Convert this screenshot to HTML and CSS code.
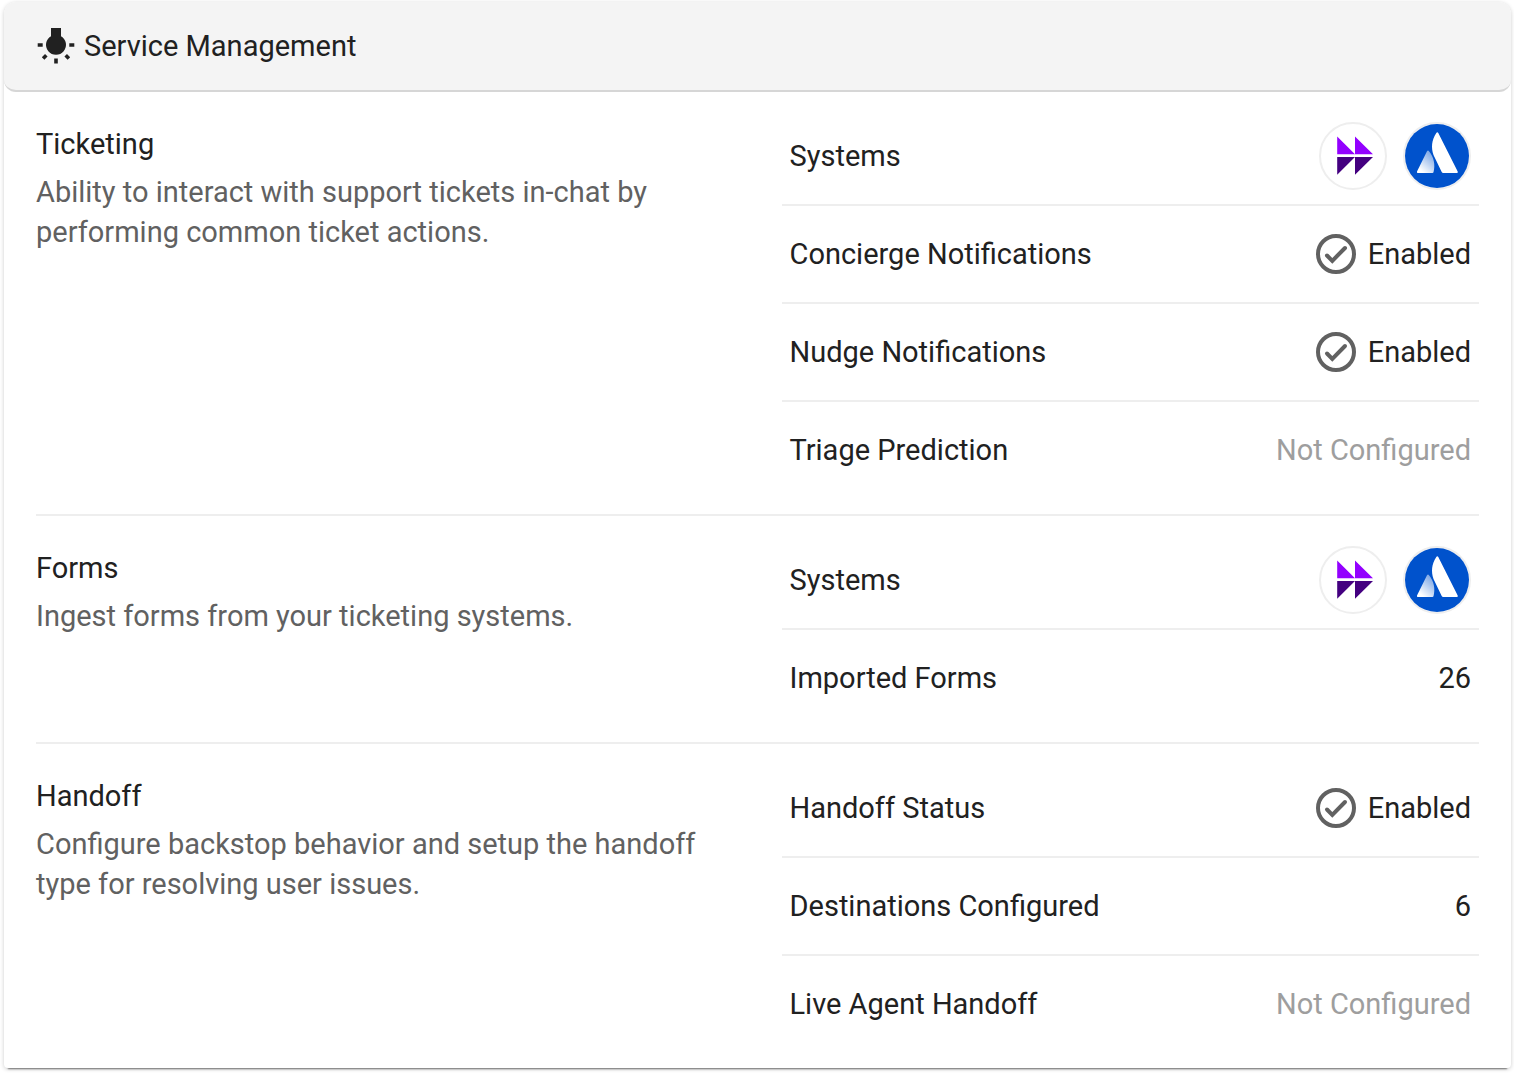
FILE: index.html
```html
<!DOCTYPE html>
<html lang="en">
<head>
<meta charset="utf-8">
<title>Service Management</title>
<meta name="viewport" content="width=device-width, initial-scale=1">
<link rel="stylesheet" href="styles.css">
</head>
<body>
<svg class="sprite" aria-hidden="true">
  <defs>
    <linearGradient id="leg-shade" x1="0.8" y1="0.1" x2="0.25" y2="0.9">
      <stop offset="0" stop-color="#fff" stop-opacity="0.5"/>
      <stop offset="1" stop-color="#fff"/>
    </linearGradient>
    <symbol id="check" viewBox="0 0 40 40">
      <circle cx="20" cy="20" r="18" fill="none" stroke="currentColor" stroke-width="4"/>
      <path d="M11 21.500l5.300 5.300L29 14" fill="none" stroke="currentColor" stroke-width="4" stroke-linecap="round"/>
    </symbol>
    <symbol id="forward" viewBox="0 0 64 64">
      <path d="M16.200 12.500v17.800H34zM34 12.500v17.800h18z" fill="#9300ff"/>
      <path d="M16.200 33H34L16.200 50.800zM34 33h18L34 50.800z" fill="#440080"/>
    </symbol>
    <symbol id="summit" viewBox="0 0 64 64">
      <circle cx="32" cy="32" r="32" fill="#0052cc"/>
      <path d="M22 27.300q1-1.500 2 0C29 33 30.500 41 28.500 48.300q-.3.700-1 .700H13q-1.500 0-1-1.500z" fill="url(#leg-shade)"/>
      <path d="M31.300 9q1-1.500 2 0L52.700 47.500q.6 1.500-1 1.500H38.200q-1 0-1.500-1L28.500 31C26 24 26.500 16 31.300 9z" fill="#fff"/>
    </symbol>
  </defs>
</svg>
<main class="card">
  <header class="card-header">
    <svg class="header-icon" viewBox="0 0 40 40" aria-hidden="true">
      <path d="M15 2h10v8.200a10 10 0 1 1-10 0z" fill="currentColor"/>
      <path d="M1.700 19h5M33.300 19h5M20 32.500v5M10.300 29.200l-3.200 3.200M29.700 29.200l3.200 3.200" fill="none" stroke="currentColor" stroke-width="3.600"/>
    </svg>
    <h1 class="card-title">Service Management</h1>
  </header>
  <section class="section">
    <div class="summary">
      <h2 class="section-title">Ticketing</h2>
      <p class="description">Ability to interact with support tickets in-chat by performing common ticket actions.</p>
    </div>
    <dl class="settings">
      <div class="row">
        <dt>Systems</dt>
        <dd class="systems">
          <span class="logo"><svg viewBox="0 0 64 64" role="img" aria-label="Forward"><use href="#forward"/></svg></span>
          <span class="logo"><svg viewBox="0 0 64 64" role="img" aria-label="Summit"><use href="#summit"/></svg></span>
        </dd>
      </div>
      <div class="row">
        <dt>Concierge Notifications</dt>
        <dd class="status"><svg class="check" aria-hidden="true"><use href="#check"/></svg>Enabled</dd>
      </div>
      <div class="row">
        <dt>Nudge Notifications</dt>
        <dd class="status"><svg class="check" aria-hidden="true"><use href="#check"/></svg>Enabled</dd>
      </div>
      <div class="row">
        <dt>Triage Prediction</dt>
        <dd class="muted">Not Configured</dd>
      </div>
    </dl>
  </section>
  <section class="section">
    <div class="summary">
      <h2 class="section-title">Forms</h2>
      <p class="description">Ingest forms from your ticketing systems.</p>
    </div>
    <dl class="settings">
      <div class="row">
        <dt>Systems</dt>
        <dd class="systems">
          <span class="logo"><svg viewBox="0 0 64 64" role="img" aria-label="Forward"><use href="#forward"/></svg></span>
          <span class="logo"><svg viewBox="0 0 64 64" role="img" aria-label="Summit"><use href="#summit"/></svg></span>
        </dd>
      </div>
      <div class="row">
        <dt>Imported Forms</dt>
        <dd>26</dd>
      </div>
    </dl>
  </section>
  <section class="section">
    <div class="summary">
      <h2 class="section-title">Handoff</h2>
      <p class="description">Configure backstop behavior and setup the handoff type for resolving user issues.</p>
    </div>
    <dl class="settings">
      <div class="row">
        <dt>Handoff Status</dt>
        <dd class="status"><svg class="check" aria-hidden="true"><use href="#check"/></svg>Enabled</dd>
      </div>
      <div class="row">
        <dt>Destinations Configured</dt>
        <dd>6</dd>
      </div>
      <div class="row">
        <dt>Live Agent Handoff</dt>
        <dd class="muted">Not Configured</dd>
      </div>
    </dl>
  </section>
</main>
</body>
</html>
```
FILE: styles.css
```css
* {
  box-sizing: border-box;
}

body {
  margin: 0;
  padding: 2px 3px 6px 4px;
  background: #fff;
  color: #212121;
  font-family: Roboto, "Liberation Sans", sans-serif;
  font-size: 29px;
  line-height: 40px;
}

h1, h2, p, dl, dd {
  margin: 0;
  font-size: inherit;
  font-weight: 400;
}

svg {
  display: block;
}

.sprite {
  position: absolute;
  width: 0;
  height: 0;
}

.card {
  border-radius: 12px 12px 4px 4px;
  background: #fff;
  box-shadow: 0 5px 2px -4px rgba(0, 0, 0, 0.5), 0 1px 4px rgba(0, 0, 0, 0.2);
}

.card-header {
  display: flex;
  align-items: center;
  gap: 8px;
  padding: 24px 32px;
  border-bottom: 2px solid #d6d6d6;
  border-radius: 12px;
  background: #f4f4f4;
}

.header-icon {
  width: 40px;
  height: 40px;
}

.section {
  display: grid;
  grid-template-columns: 1fr 1fr;
  gap: 48px;
  margin: 0 32px;
  padding: 16px 0;
}

.section + .section {
  border-top: 2px solid #eee;
}

.summary {
  padding: 16px 0;
}

.description {
  margin-top: 8px;
  color: #616161;
}

.row {
  display: flex;
  align-items: center;
  justify-content: space-between;
  min-height: 96px;
  padding: 14px 8px;
}

.row + .row {
  border-top: 2px solid #eee;
  min-height: 98px;
}

.systems,
.status {
  display: flex;
  align-items: center;
}

.systems {
  gap: 16px;
}

.status {
  gap: 12px;
}

.logo {
  width: 68px;
  height: 68px;
  border: 2px solid #eee;
  border-radius: 50%;
}

.check {
  width: 40px;
  height: 40px;
  color: #616161;
}

.muted {
  color: #9e9e9e;
}
```
